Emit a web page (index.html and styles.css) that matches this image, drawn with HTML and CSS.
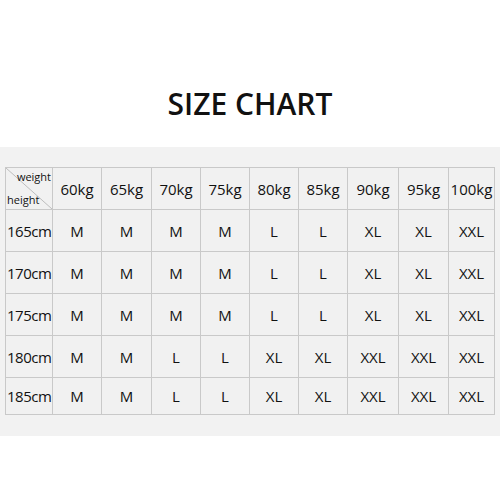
FILE: index.html
```html
<!DOCTYPE html>
<html>
<head>
<meta charset="utf-8">
<link rel="stylesheet" href="styles.css">
</head>
<body>
<div class="head"><h1 class="title">SIZE CHART</h1></div>
<div class="panel">
  <div class="grid">
    <div class="cell corner">
      <svg class="diag" viewBox="0 0 46 41" preserveAspectRatio="none"><line x1="0" y1="0" x2="46" y2="41" stroke="#bdbdbd" stroke-width="1"/></svg>
      <span class="w">weight</span><span class="h">height</span>
    </div>
    <div class="cell">60kg</div><div class="cell">65kg</div><div class="cell">70kg</div><div class="cell">75kg</div><div class="cell">80kg</div><div class="cell">85kg</div><div class="cell">90kg</div><div class="cell">95kg</div><div class="cell">100kg</div>

    <div class="cell rh">165cm</div><div class="cell">M</div><div class="cell">M</div><div class="cell">M</div><div class="cell">M</div><div class="cell">L</div><div class="cell">L</div><div class="cell">XL</div><div class="cell">XL</div><div class="cell">XXL</div>
    <div class="cell rh">170cm</div><div class="cell">M</div><div class="cell">M</div><div class="cell">M</div><div class="cell">M</div><div class="cell">L</div><div class="cell">L</div><div class="cell">XL</div><div class="cell">XL</div><div class="cell">XXL</div>
    <div class="cell rh">175cm</div><div class="cell">M</div><div class="cell">M</div><div class="cell">M</div><div class="cell">M</div><div class="cell">L</div><div class="cell">L</div><div class="cell">XL</div><div class="cell">XL</div><div class="cell">XXL</div>
    <div class="cell rh">180cm</div><div class="cell">M</div><div class="cell">M</div><div class="cell">L</div><div class="cell">L</div><div class="cell">XL</div><div class="cell">XL</div><div class="cell">XXL</div><div class="cell">XXL</div><div class="cell">XXL</div>
    <div class="cell rh">185cm</div><div class="cell">M</div><div class="cell">M</div><div class="cell">L</div><div class="cell">L</div><div class="cell">XL</div><div class="cell">XL</div><div class="cell">XXL</div><div class="cell">XXL</div><div class="cell">XXL</div>
  </div>
</div>
</body>
</html>
```
FILE: styles.css
```css
html, body {
  margin: 0;
  padding: 0;
  background: #ffffff;
}
body {
  font-family: "Open Sans", "Noto Sans", sans-serif;
  color: #111111;
  width: 500px;
  height: 500px;
  overflow: hidden;
}
.head {
  height: 147px;
  display: flex;
  justify-content: center;
  align-items: flex-start;
}
.title {
  margin: 84px 0 0 0;
  font-size: 30px;
  font-weight: 600;
  line-height: 40px;
  letter-spacing: 0;
  color: #111111;
}
.panel {
  background: #f2f2f2;
  padding: 20px 5px 22px 5px;
  height: 247px;
}
.grid {
  display: grid;
  grid-template-columns: 46px 48px 49px 48px 48px 48px 48px 50px 49px 45px;
  grid-template-rows: 41px 41px 41px 41px 41px 36px;
  gap: 1px;
  padding: 1px;
  background: #c9c9c9;
  width: 490px;
  box-sizing: border-box;
}
.cell {
  background: #f1f1f1;
  display: flex;
  align-items: center;
  justify-content: center;
  font-size: 15px;
  white-space: nowrap;
}
.rh {
  justify-content: flex-start;
  padding-left: 1px;
  letter-spacing: -0.5px;
}
.corner {
  position: relative;
  display: block;
  font-size: 11px;
}
.diag {
  position: absolute;
  left: 0;
  top: 0;
  width: 100%;
  height: 100%;
}
.w {
  position: absolute;
  right: 1px;
  top: 1px;
}
.h {
  position: absolute;
  left: 1px;
  bottom: 2px;
}
```
